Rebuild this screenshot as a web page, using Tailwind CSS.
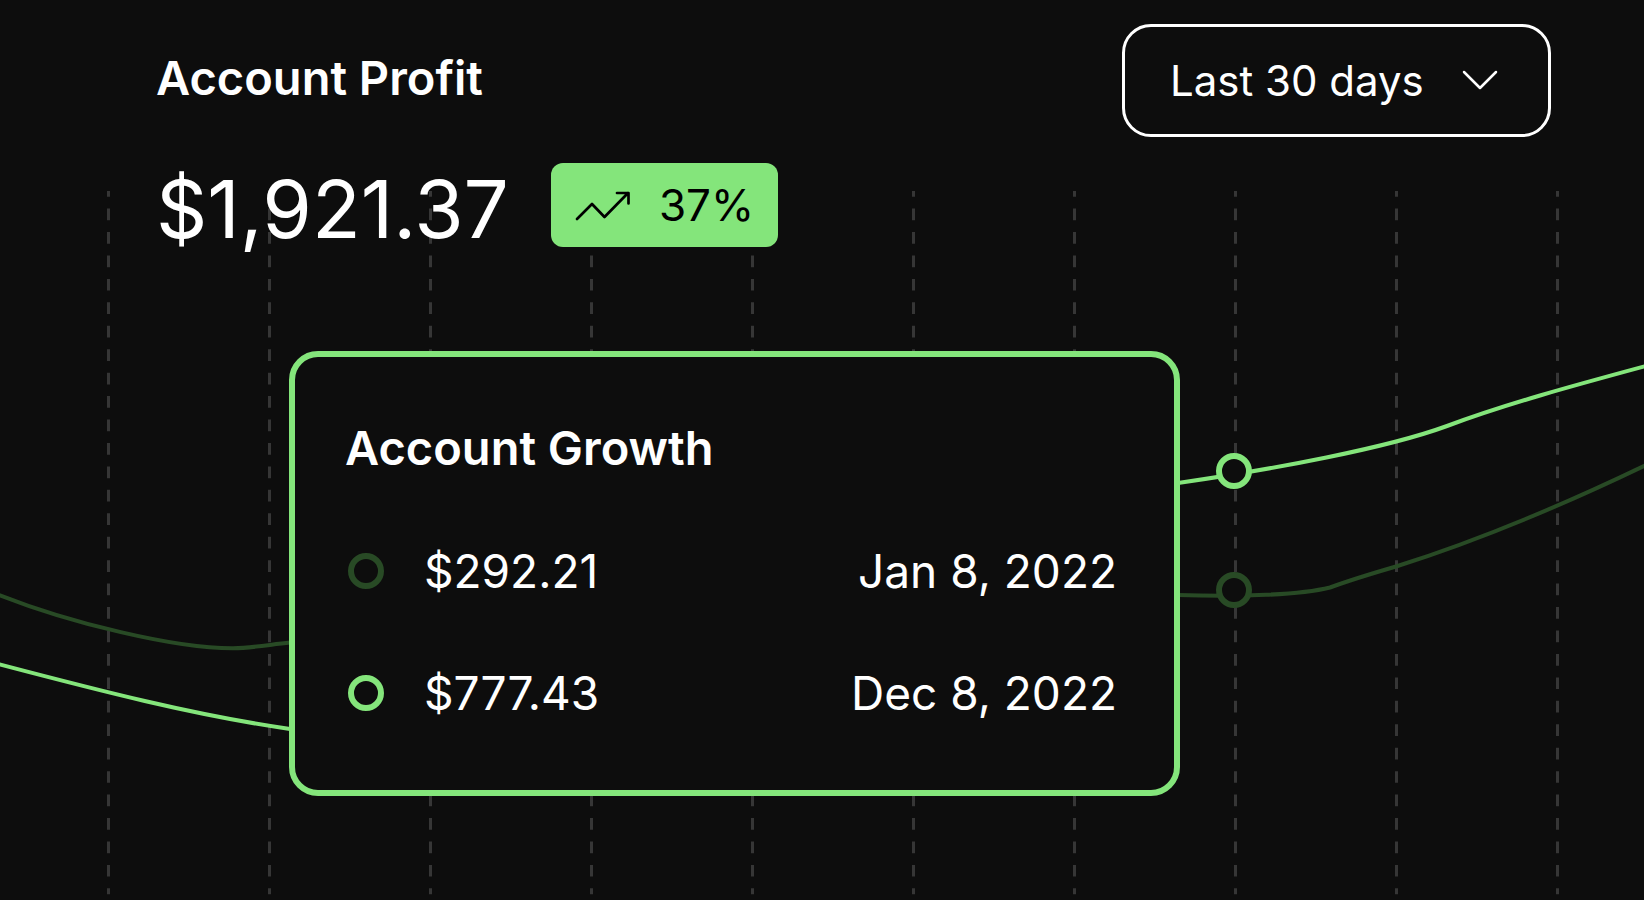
<!DOCTYPE html>
<html lang="en">
<head>
<meta charset="utf-8">
<meta name="viewport" content="width=device-width, initial-scale=1">
<title>Account Profit</title>
<script src="https://cdn.jsdelivr.net/npm/@tailwindcss/browser@4"></script>
</head>
<body class="bg-[#0d0d0d] font-['Inter',sans-serif] text-white">
<main class="relative min-h-screen overflow-hidden">
  <!-- Chart: month gridlines, two series, hovered points -->
  <svg class="absolute inset-0 h-full w-full" viewBox="0 0 1644 900" preserveAspectRatio="xMidYMid slice" fill="none" aria-hidden="true">
    <path stroke="#363636" stroke-width="3" stroke-dasharray="11.72" stroke-dashoffset="5.86" d="M108.5 191V894.3M269.5 191V894.3M430.5 191V894.3M591.5 191V894.3M752.5 191V894.3M913.5 191V894.3M1074.5 191V894.3M1235.5 191V894.3M1396.5 191V894.3M1557.5 191V894.3"/>
    <g stroke="#284a25" stroke-width="4">
      <path d="M-2 594.500C70 623 175 648.500 233 648.300C253 648 270 644.500 290 642.500"/>
      <path d="M1178 595C1240 597 1300 595 1330 587.500C1345 582 1365 575.500 1396 566.500C1480 540 1565 504 1646 465"/>
      <circle cx="1234" cy="590" r="15" stroke-width="6" fill="#0d0d0d"/>
    </g>
    <g stroke="#84e57b" stroke-width="4">
      <path d="M-2 664C97 690 193 715 290 729"/>
      <path d="M1178 483C1275 469 1387 448 1447 426C1506 404 1572 386 1646 366"/>
      <circle cx="1234" cy="471" r="15" stroke-width="6" fill="#0d0d0d"/>
    </g>
  </svg>

  <header class="relative flex items-start justify-between pt-6 pr-[93px] pl-[156px]">
    <div>
      <h1 class="mt-6 text-[47px] leading-[60px] font-semibold">Account Profit</h1>
      <div class="mt-[51px] flex items-center gap-[42px]">
        <p class="pt-2 text-[80px] leading-[84px]">$1,921.37</p>
        <p class="flex h-[84px] items-center gap-7 rounded-xl bg-[#84e57b] px-6 text-[44px] text-black">
          <svg class="h-8 w-14" viewBox="0 0 56 32" fill="none" stroke="currentColor" stroke-width="2.700" stroke-linecap="round" stroke-linejoin="round" aria-hidden="true"><path d="M2 30L17 15L29.500 28L53 4M42 4H53.500V14.500"/></svg>
          37%
        </p>
      </div>
    </div>
    <div class="relative w-[429px]">
      <select aria-label="Period" class="h-[113px] w-full appearance-none rounded-[29px] border-3 border-white bg-[#0d0d0d] pr-[110px] pl-[45px] text-[42px]">
        <option>Last 30 days</option>
      </select>
      <svg class="pointer-events-none absolute top-[38px] right-[53px] h-9 w-9" viewBox="0 0 36 36" fill="none" stroke="currentColor" stroke-width="2.500" stroke-linecap="round" stroke-linejoin="round" aria-hidden="true"><path d="M2 10L18 26L34 10"/></svg>
    </div>
  </header>

  <!-- Tooltip over the chart -->
  <section class="absolute top-[351px] left-[289px] w-[891px] rounded-[29px] border-6 border-[#84e57b] bg-[#0d0d0d] pt-[61px] pr-[57px] pb-9 pl-[50px]">
    <h2 class="text-[47px] leading-[60px] font-semibold">Account Growth</h2>
    <ul class="mt-8 text-[46px]">
      <li class="flex h-[122px] items-center">
        <span class="ml-[3px] size-9 rounded-full border-6 border-[#284a25]"></span>
        <span class="ml-10">$292.21</span>
        <time class="ml-auto" datetime="2022-01-08">Jan 8, 2022</time>
      </li>
      <li class="flex h-[122px] items-center">
        <span class="ml-[3px] size-9 rounded-full border-6 border-[#84e57b]"></span>
        <span class="ml-10">$777.43</span>
        <time class="ml-auto" datetime="2022-12-08">Dec 8, 2022</time>
      </li>
    </ul>
  </section>
</main>
</body>
</html>
